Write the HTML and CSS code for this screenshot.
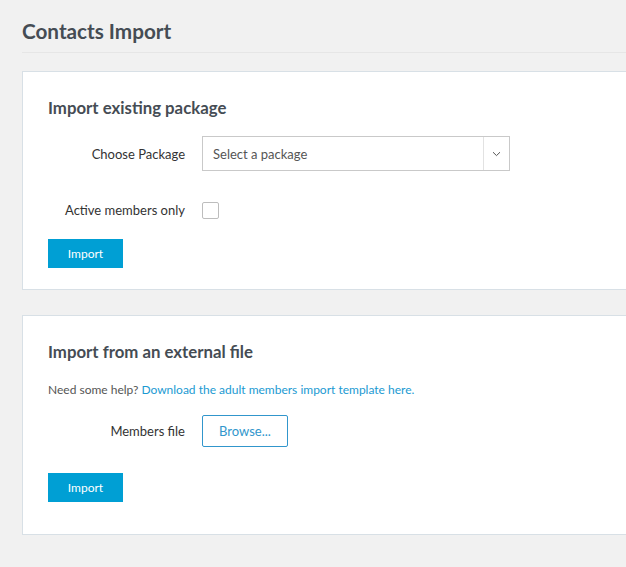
FILE: index.html
```html
<!DOCTYPE html>
<html>
<head>
<meta charset="utf-8">
<link rel="stylesheet" href="styles.css">
</head>
<body>
<div class="page">
  <header class="page-header">
    <h1>Contacts Import</h1>
  </header>

  <section class="card card-first">
    <h2>Import existing package</h2>
    <div class="form-row row-select">
      <label class="label">Choose Package</label>
      <div class="select">
        <span class="select-text">Select a package</span>
        <span class="select-arrow">
          <svg width="9" height="6" viewBox="0 0 9 6"><path d="M1 1.2 L4.5 4.6 L8 1.2" fill="none" stroke="#555" stroke-width="1"/></svg>
        </span>
      </div>
    </div>
    <div class="form-row row-check">
      <label class="label">Active members only</label>
      <span class="checkbox"></span>
    </div>
    <button class="btn-primary">Import</button>
  </section>

  <section class="card card-second">
    <h2>Import from an external file</h2>
    <p class="help">Need some help? <a href="#">Download the adult members import template here.</a></p>
    <div class="form-row row-file">
      <label class="label">Members file</label>
      <button class="btn-outline">Browse...</button>
    </div>
    <button class="btn-primary">Import</button>
  </section>
</div>
</body>
</html>
```

FILE: styles.css
```css
html, body {
  margin: 0;
  padding: 0;
  background: #f1f1f1;
  overflow: hidden;
}
body {
  font-family: Lato, "Open Sans", "Liberation Sans", sans-serif;
  color: #333;
  width: 626px;
  height: 567px;
}
.page {
  padding-left: 22px;
}
.page-header {
  height: 52px;
  border-bottom: 1px solid #e6e6e6;
  display: flex;
  align-items: flex-end;
}
.page-header h1 {
  margin: 0 0 9px 0;
  font-size: 20.7px;
  font-weight: 700;
  color: #454c54;
}
.card {
  background: #fff;
  border: 1px solid #d8e0e6;
  border-right: none;
  padding: 0 0 0 25px;
  box-sizing: border-box;
  display: flex;
  flex-direction: column;
  align-items: flex-start;
}
.card-first {
  margin-top: 18px;
  height: 219px;
}
.card-second {
  margin-top: 25px;
  height: 220px;
}
.card h2 {
  margin: 25px 0 0 0;
  font-size: 16.8px;
  font-weight: 700;
  color: #454c54;
  height: 22px;
  line-height: 22px;
}
.form-row {
  display: flex;
  align-items: center;
}
.row-select {
  margin-top: 17px;
}
.label {
  width: 154px;
  text-align: right;
  font-size: 13px;
  color: #333;
  padding-right: 17px;
  box-sizing: border-box;
  flex: none;
}
.select {
  width: 308px;
  height: 35px;
  box-sizing: border-box;
  border: 1px solid #c9c9c9;
  display: flex;
  align-items: stretch;
}
.select-text {
  flex: 1;
  display: flex;
  align-items: center;
  padding-left: 10px;
  font-size: 13px;
  color: #555;
}
.select-arrow {
  width: 25px;
  border-left: 1px solid #e2e2e2;
  display: flex;
  align-items: center;
  justify-content: center;
}
.row-check {
  margin-top: 22px;
  height: 34px;
}
.checkbox {
  width: 17px;
  height: 17px;
  box-sizing: border-box;
  border: 1px solid #bdbdbd;
  border-radius: 2px;
  background: #fff;
}
.btn-primary {
  width: 75px;
  height: 29px;
  background: #009fd4;
  color: #fff;
  border: none;
  font-family: inherit;
  font-size: 12px;
  padding: 0;
  margin-top: 12px;
}
.card-second .btn-primary {
  margin-top: 26px;
}
.help {
  margin: 19px 0 0 0;
  font-size: 12px;
  color: #555;
  height: 16px;
  line-height: 16px;
}
.help a {
  color: #1b9ad2;
  text-decoration: none;
}
.row-file {
  margin-top: 17px;
}
.btn-outline {
  width: 86px;
  height: 32px;
  background: #fff;
  border: 1px solid #3196cc;
  border-radius: 2px;
  color: #3196cc;
  font-family: inherit;
  font-size: 13px;
  padding: 0;
}
```
